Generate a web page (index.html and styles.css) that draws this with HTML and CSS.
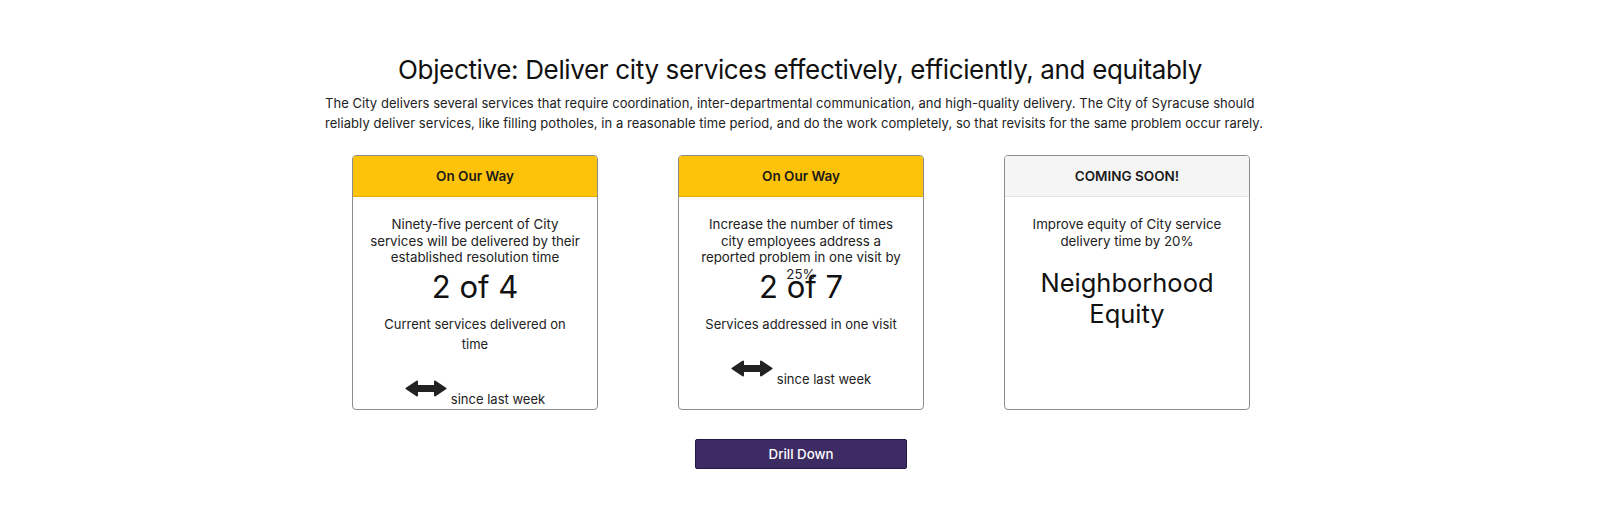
FILE: index.html
```html
<!DOCTYPE html>
<html lang="en">
<head>
<meta charset="utf-8">
<title>Objective</title>
<link rel="stylesheet" href="styles.css">
</head>
<body>
<main class="page">
  <h1 class="title">Objective: Deliver city services effectively, efficiently, and equitably</h1>
  <p class="intro">The City delivers several services that require coordination, inter-departmental communication, and high-quality delivery. The City of Syracuse should reliably deliver services, like filling potholes, in a reasonable time period, and do the work completely, so that revisits for the same problem occur rarely.</p>

  <section class="cards">
    <div class="card">
      <div class="card-header status-way">On Our Way</div>
      <div class="card-body">
        <div class="goal">Ninety-five percent of City services will be delivered by their established resolution time</div>
        <div class="metric">2 of 4</div>
        <div class="desc">Current services delivered on time</div>
        <div class="trend">
          <svg class="arrow" width="42" height="17" viewBox="0 0 42 17"><path d="M1.5 8.5 L12 1.5 L12 6 L30 6 L30 1.5 L40.5 8.5 L30 15.5 L30 11 L12 11 L12 15.5 Z" fill="#222" stroke="#222" stroke-width="2" stroke-linejoin="round"/></svg>
          <span class="trend-text">since last week</span>
        </div>
      </div>
    </div>

    <div class="card">
      <div class="card-header status-way">On Our Way</div>
      <div class="card-body">
        <div class="goal">Increase the number of times city employees address a reported problem in one visit by 25%</div>
        <div class="metric">2 of 7</div>
        <div class="desc">Services addressed in one visit</div>
        <div class="trend">
          <svg class="arrow" width="42" height="17" viewBox="0 0 42 17"><path d="M1.5 8.5 L12 1.5 L12 6 L30 6 L30 1.5 L40.5 8.5 L30 15.5 L30 11 L12 11 L12 15.5 Z" fill="#222" stroke="#222" stroke-width="2" stroke-linejoin="round"/></svg>
          <span class="trend-text">since last week</span>
        </div>
      </div>
    </div>

    <div class="card">
      <div class="card-header status-soon">COMING SOON!</div>
      <div class="card-body">
        <div class="goal">Improve equity of City service delivery time by 20%</div>
        <div class="feature">Neighborhood Equity</div>
      </div>
    </div>
  </section>

  <div class="actions">
    <button class="drill" type="button">Drill Down</button>
  </div>
</main>
</body>
</html>
```

FILE: styles.css
```css
* { box-sizing: border-box; }

body {
  margin: 0;
  background: #fff;
  color: #1d1d1f;
  font-family: Inter, "Liberation Sans", Arial, sans-serif;
}

.page {
  padding-top: 54px;
}

.title {
  margin: 0;
  text-align: center;
  font-size: 26px;
  line-height: 32px;
  font-weight: 400;
  color: #111;
  letter-spacing: -0.35px;
}

.intro {
  width: 950px;
  margin: 8px auto 0;
  font-size: 13px;
  line-height: 19.5px;
  color: #222;
  letter-spacing: 0.05px;
}

.cards {
  display: flex;
  justify-content: center;
  gap: 80px;
  margin-top: 22px;
  padding-left: 2px;
}

.card {
  width: 246px;
  height: 255px;
  border: 1px solid #8c8c8c;
  border-radius: 4px;
  background: #fff;
}

.card-header {
  height: 41px;
  display: flex;
  align-items: center;
  justify-content: center;
  font-size: 13.5px;
  font-weight: 600;
  color: #1a1a1a;
  border-radius: 3px 3px 0 0;
  border-bottom: 1px solid #d9d9d9;
}

.status-way {
  background: #fdc30b;
  border-bottom-color: #e3ad00;
}

.status-soon {
  background: #f5f5f5;
  border-bottom-color: #e4e4e4;
}

.card-body {
  padding: 19px 15px 0;
  text-align: center;
  color: #222;
}

.goal {
  width: 210.15px;
  height: 49px;
  margin: 0 auto;
  font-size: 13.3px;
  line-height: 16.5px;
}

.metric {
  margin-top: 4px;
  font-size: 31px;
  line-height: 36px;
  color: #111;
}

.desc {
  width: 206px;
  margin: 9px auto 0;
  font-size: 13px;
  line-height: 20px;
}

.trend {
  margin-top: 26px;
  display: flex;
  justify-content: center;
  align-items: flex-end;
}

.arrow {
  display: block;
  margin-bottom: 10px;
}

.trend-text {
  margin-left: 4px;
  font-size: 13px;
  line-height: 16px;
}

.feature {
  margin-top: 2px;
  font-size: 25.5px;
  line-height: 31px;
  color: #111;
}

.actions {
  display: flex;
  justify-content: center;
  margin-top: 29px;
  padding-left: 2px;
}

.drill {
  width: 212px;
  height: 30px;
  border: 1px solid #241844;
  border-radius: 2px;
  background: #3d2b63;
  color: #fff;
  font-family: Inter, "Liberation Sans", Arial, sans-serif;
  font-size: 13.3px;
  font-weight: 500;
  cursor: pointer;
}
```
